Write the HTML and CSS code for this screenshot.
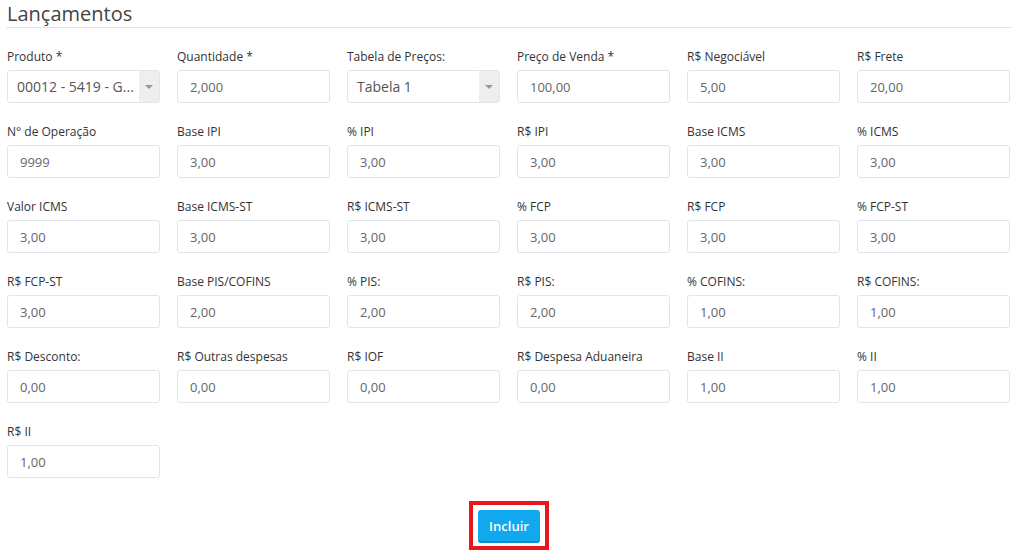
FILE: index.html
```html
<!DOCTYPE html>
<html lang="pt-BR">
<head>
    <meta charset="UTF-8">
    <title>Lançamentos</title>
    <link rel="stylesheet" href="styles.css">
</head>
<body>

    <div class="page">
        <h3 class="title">Lançamentos</h3>

        <!-- Campos do lançamento -->
        <div class="form-grid">
            <div class="field">
                <label>Produto *</label>
                <div class="select-box">
                    <span class="select-text">00012 - 5419 - G...</span>
                    <span class="select-arrow"></span>
                </div>
            </div>
            <div class="field">
                <label>Quantidade *</label>
                <input class="input" value="2,000">
            </div>
            <div class="field">
                <label>Tabela de Preços:</label>
                <div class="select-box">
                    <span class="select-text">Tabela 1</span>
                    <span class="select-arrow"></span>
                </div>
            </div>
            <div class="field">
                <label>Preço de Venda *</label>
                <input class="input" value="100,00">
            </div>
            <div class="field">
                <label>R$ Negociável</label>
                <input class="input" value="5,00">
            </div>
            <div class="field">
                <label>R$ Frete</label>
                <input class="input" value="20,00">
            </div>

            <div class="field">
                <label>N° de Operação</label>
                <input class="input" value="9999">
            </div>
            <div class="field">
                <label>Base IPI</label>
                <input class="input" value="3,00">
            </div>
            <div class="field">
                <label>% IPI</label>
                <input class="input" value="3,00">
            </div>
            <div class="field">
                <label>R$ IPI</label>
                <input class="input" value="3,00">
            </div>
            <div class="field">
                <label>Base ICMS</label>
                <input class="input" value="3,00">
            </div>
            <div class="field">
                <label>% ICMS</label>
                <input class="input" value="3,00">
            </div>

            <div class="field">
                <label>Valor ICMS</label>
                <input class="input" value="3,00">
            </div>
            <div class="field">
                <label>Base ICMS-ST</label>
                <input class="input" value="3,00">
            </div>
            <div class="field">
                <label>R$ ICMS-ST</label>
                <input class="input" value="3,00">
            </div>
            <div class="field">
                <label>% FCP</label>
                <input class="input" value="3,00">
            </div>
            <div class="field">
                <label>R$ FCP</label>
                <input class="input" value="3,00">
            </div>
            <div class="field">
                <label>% FCP-ST</label>
                <input class="input" value="3,00">
            </div>

            <div class="field">
                <label>R$ FCP-ST</label>
                <input class="input" value="3,00">
            </div>
            <div class="field">
                <label>Base PIS/COFINS</label>
                <input class="input" value="2,00">
            </div>
            <div class="field">
                <label>% PIS:</label>
                <input class="input" value="2,00">
            </div>
            <div class="field">
                <label>R$ PIS:</label>
                <input class="input" value="2,00">
            </div>
            <div class="field">
                <label>% COFINS:</label>
                <input class="input" value="1,00">
            </div>
            <div class="field">
                <label>R$ COFINS:</label>
                <input class="input" value="1,00">
            </div>

            <div class="field">
                <label>R$ Desconto:</label>
                <input class="input" value="0,00">
            </div>
            <div class="field">
                <label>R$ Outras despesas</label>
                <input class="input" value="0,00">
            </div>
            <div class="field">
                <label>R$ IOF</label>
                <input class="input" value="0,00">
            </div>
            <div class="field">
                <label>R$ Despesa Aduaneira</label>
                <input class="input" value="0,00">
            </div>
            <div class="field">
                <label>Base II</label>
                <input class="input" value="1,00">
            </div>
            <div class="field">
                <label>% II</label>
                <input class="input" value="1,00">
            </div>

            <div class="field">
                <label>R$ II</label>
                <input class="input" value="1,00">
            </div>
        </div>

        <!-- Botao incluir -->
        <div class="actions">
            <span class="highlight">
                <button class="btn-primary">Incluir</button>
            </span>
        </div>
    </div>

</body>
</html>
```

FILE: styles.css
```css
body {
    font-family: "Open Sans", "DejaVu Sans", sans-serif;
    margin: 0;
    padding: 0;
    background-color: #fff;
    color: #333;
}

.page {
    width: 1006px;
    margin-left: 6px;
}

.title {
    margin: 0;
    font-size: 20px;
    font-weight: normal;
    line-height: 27px;
    color: #444;
    padding-left: 1px;
    border-bottom: 1px solid #e5e5e5;
}

.form-grid {
    display: grid;
    grid-template-columns: repeat(6, 153px);
    column-gap: 17px;
    row-gap: 20px;
    padding: 20px 0 0 1px;
}

.field label {
    display: block;
    font-size: 12px;
    line-height: 18px;
    color: #333;
    margin-bottom: 4px;
}

.input {
    box-sizing: border-box;
    width: 153px;
    height: 33px;
    padding: 0 12px;
    border: 1px solid #e2e5e8;
    border-radius: 3px;
    font-family: inherit;
    font-size: 13px;
    color: #666;
    background-color: #fff;
    outline: none;
}

.select-box {
    box-sizing: border-box;
    display: flex;
    align-items: center;
    width: 153px;
    height: 33px;
    border: 1px solid #e2e5e8;
    border-radius: 3px;
    background-color: #fff;
}

.select-text {
    flex: 1;
    padding-left: 9px;
    font-size: 14px;
    color: #555;
    white-space: nowrap;
    overflow: hidden;
}

.select-arrow {
    width: 20px;
    height: 100%;
    background-color: #eee;
    border-radius: 0 2px 2px 0;
    position: relative;
}

.select-arrow::after {
    content: "";
    position: absolute;
    left: 6px;
    top: 14px;
    border-left: 4px solid transparent;
    border-right: 4px solid transparent;
    border-top: 4px solid #999;
}

.actions {
    display: flex;
    justify-content: center;
    padding-top: 23px;
}

.highlight {
    display: inline-block;
    border: 4px solid #e8161d;
    padding: 5px 5px 3px;
}

.btn-primary {
    display: block;
    width: 62px;
    height: 33px;
    background-color: #11a8ee;
    color: #fff;
    font-family: inherit;
    font-size: 13px;
    font-weight: 600;
    border: none;
    border-bottom: 2px solid #0d8fcc;
    border-radius: 3px;
    cursor: pointer;
}
```
